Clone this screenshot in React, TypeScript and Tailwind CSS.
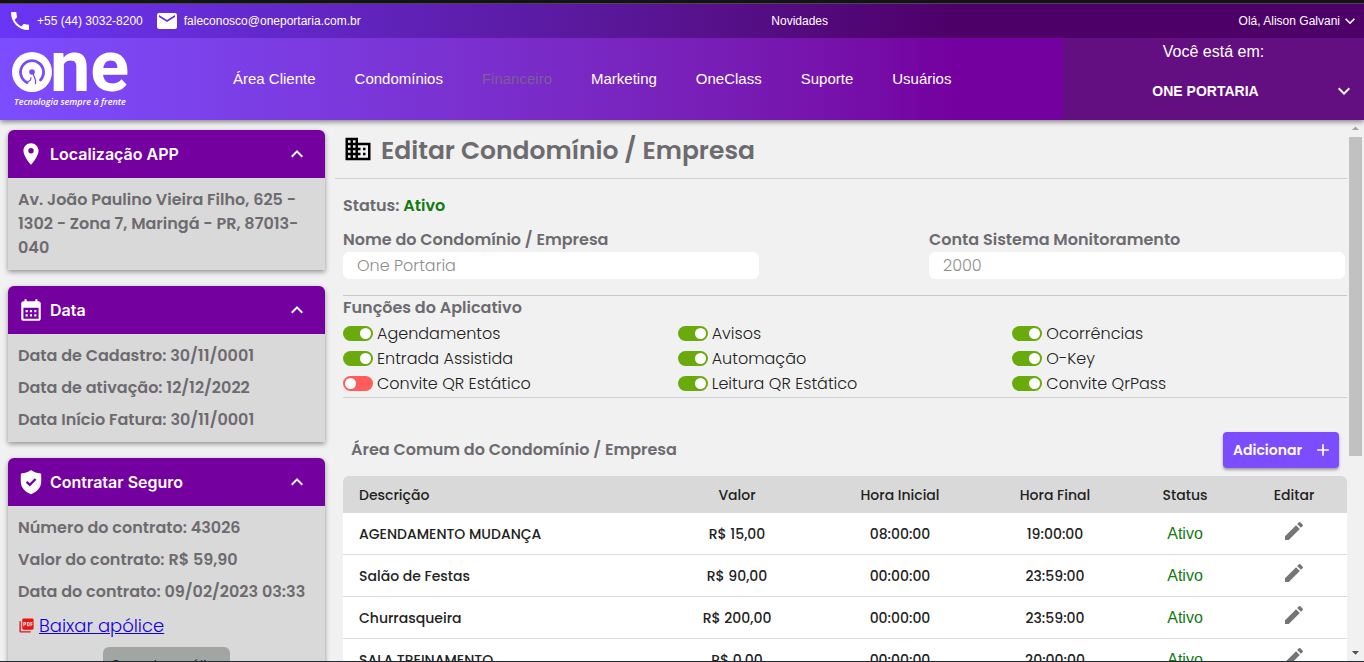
import React, { useState } from "react";
import {
  MdAdd, MdCalendarMonth, MdDomain, MdEdit, MdEmail, MdExpandLess, MdExpandMore,
  MdLocationOn, MdPhone, MdPictureAsPdf, MdArrowDropDown, MdArrowDropUp,
} from "react-icons/md";

const navItems = ["Área Cliente", "Condomínios", "Financeiro", "Marketing", "OneClass", "Suporte", "Usuários"];

const features = [
  { name: "Agendamentos", on: true },
  { name: "Avisos", on: true },
  { name: "Ocorrências", on: true },
  { name: "Entrada Assistida", on: true },
  { name: "Automação", on: true },
  { name: "O-Key", on: true },
  { name: "Convite QR Estático", on: false },
  { name: "Leitura QR Estático", on: true },
  { name: "Convite QrPass", on: true },
];

const areas = [
  { name: "AGENDAMENTO MUDANÇA", price: "R$ 15,00", start: "08:00:00", end: "19:00:00" },
  { name: "Salão de Festas", price: "R$ 90,00", start: "00:00:00", end: "23:59:00" },
  { name: "Churrasqueira", price: "R$ 200,00", start: "00:00:00", end: "23:59:00" },
  { name: "SALA TREINAMENTO", price: "R$ 0,00", start: "00:00:00", end: "20:00:00" },
];

function Logo() {
  return (
    <svg viewBox="0 0 124 62" className="h-[62px] w-[124px] overflow-visible" role="img" aria-label="One">
      <circle cx="22" cy="24" r="20" fill="#fff" />
      <path d="M17 34.500 A11.500 11.500 0 1 1 30.500 32" fill="none" stroke="#7a4bf7" strokeWidth="2.800" strokeLinecap="round" />
      <circle cx="22" cy="24" r="2.800" fill="#7a4bf7" />
      <path d="M23 25.500 L25.500 32 L25.500 35.500" fill="none" stroke="#7a4bf7" strokeWidth="1.300" strokeLinecap="round" />
      <path d="M17 34.500 L20.500 32 L21 29.500" fill="none" stroke="#7a4bf7" strokeWidth="1.200" strokeLinecap="round" />
      <text x="40" y="43" fontSize="72" fontWeight="700" fill="#fff" className="font-['Roboto',sans-serif]">ne</text>
      <text x="4" y="57" fontSize="9" fontStyle="italic" fontWeight="600" fill="#fff" className="font-['Open_Sans',sans-serif]">Tecnologia sempre à frente</text>
    </svg>
  );
}

function ShieldIcon() {
  return (
    <svg viewBox="0 0 26 26" className="size-[26px]" aria-hidden="true">
      <path d="M13 1C15.200 2.700 18.800 4 22 4.300q1.200.100 1.200 1.300V12.500C23.200 19 18.500 23 13 25.200 7.500 23 2.800 19 2.800 12.500V5.600q0-1.200 1.200-1.300C7.200 4 10.800 2.700 13 1Z" fill="#fff" />
      <path d="M8.600 12.800l3.200 3.100 5.800-5.900" fill="none" stroke="#74009f" strokeWidth="2.300" />
    </svg>
  );
}

function Card({ icon, title, children }: { icon: React.ReactNode; title: string; children: React.ReactNode }) {
  const [open, setOpen] = useState(true);
  return (
    <section className="shrink-0 rounded-t-md bg-[#d9d9d9] shadow-[0_2px_5px_rgba(0,0,0,0.4)]">
      <h2>
        <button
          type="button"
          aria-expanded={open}
          onClick={() => setOpen(!open)}
          className="flex h-12 w-full items-center gap-1.5 rounded-t-md bg-[#74009f] pl-2.5 pr-4 text-left font-['Inter',sans-serif] font-semibold text-white"
        >
          {icon}
          <span className="flex-1">{title}</span>
          <MdExpandLess className="size-6" />
        </button>
      </h2>
      {open && (
        <div className="flex flex-col gap-2 p-2.5 leading-6 font-semibold text-[#6d6a70]">{children}</div>
      )}
    </section>
  );
}

function Toggle({ name, on }: { name: string; on: boolean }) {
  return (
    <label className="flex h-[25px] items-center gap-1 text-base font-light text-[#222]">
      <input
        type="checkbox"
        defaultChecked={on}
        className="h-[15px] w-[30px] appearance-none rounded-full bg-[#ff5c5c] p-0.5 before:block before:size-[11px] before:rounded-full before:bg-white checked:bg-[#6aaa0c] checked:before:ml-auto"
      />
      <span>{name}</span>
    </label>
  );
}

function Field({ id, label, value }: { id: string; label: string; value: string }) {
  return (
    <div className="flex w-[416px] flex-col">
      <label htmlFor={id} className="text-base font-semibold leading-6 text-[#6d6a70]">{label}</label>
      <input
        id={id}
        defaultValue={value}
        className="h-[27px] rounded-md bg-white px-3.5 text-base font-light text-[#8e8e8e] outline-none"
      />
    </div>
  );
}

export default function App() {
  return (
    <div className="flex h-screen flex-col overflow-hidden border-b border-b-[#1f2933] bg-[#f1f1f1] font-['Poppins','Inter',sans-serif]">
      <header className="relative z-10 shrink-0 border-t-[3px] border-t-[#131313] font-['Liberation_Sans',Arial,sans-serif] text-white shadow-[0_2px_5px_rgba(0,0,0,0.45)]">
        <div className="flex h-[35px] items-center justify-between border-t border-t-[#4c4458] bg-linear-to-r from-[#6a35f5] to-[#4e0069] to-70% pl-2 pr-1 text-xs">
          <div className="flex items-center gap-3">
            <a href="tel:+554430328200" className="flex items-center gap-[5px]"><MdPhone className="size-6" />+55 (44) 3032-8200</a>
            <a href="mailto:faleconosco@oneportaria.com.br" className="flex items-center gap-[5px]"><MdEmail className="size-6" />faleconosco@oneportaria.com.br</a>
          </div>
          <a href="#novidades">Novidades</a>
          <button type="button" className="flex items-center">Olá, Alison Galvani<MdExpandMore className="size-5" /></button>
        </div>
        <div className="flex h-[82px] bg-linear-to-r from-[#7c4dff] to-[#74009f] to-70%">
          <a href="#inicio" className="ml-2.5 mt-2.5 w-[223px] shrink-0"><Logo /></a>
          <nav className="flex flex-1 items-center gap-[39px] text-[15px]">
            {navItems.map((item) => (
              <a key={item} href="#menu" className={item === "Financeiro" ? "text-[#77609a]" : ""}>{item}</a>
            ))}
          </nav>
          <div className="flex w-[301px] flex-col items-center bg-[#630f82] pt-0.5">
            <label htmlFor="unit" className="text-base leading-6">Você está em:</label>
            <div className="mt-3 flex h-[30px] w-full items-center">
              <select id="unit" className="flex-1 appearance-none bg-transparent pl-4 text-center text-sm font-bold outline-none">
                <option>ONE PORTARIA</option>
              </select>
              <MdExpandMore className="mr-2 size-6" />
            </div>
          </div>
        </div>
      </header>

      <div className="flex min-h-0 flex-1">
        <aside className="flex w-[335px] shrink-0 flex-col gap-4 overflow-hidden pb-2 pl-2 pr-2.5 pt-2.5">
          <Card title="Localização APP" icon={<MdLocationOn className="size-[26px]" />}>
            <p>Av. João Paulino Vieira Filho, 625 - 1302 - Zona 7, Maringá - PR, 87013-040</p>
          </Card>
          <Card title="Data" icon={<MdCalendarMonth className="size-[26px]" />}>
            <p>Data de Cadastro: 30/11/0001</p>
            <p>Data de ativação: 12/12/2022</p>
            <p>Data Início Fatura: 30/11/0001</p>
          </Card>
          <Card title="Contratar Seguro" icon={<ShieldIcon />}>
            <p>Número do contrato: 43026</p>
            <p>Valor do contrato: R$ 59,90</p>
            <p>Data do contrato: 09/02/2023 03:33</p>
            <a href="#apolice" className="flex h-[27px] items-center gap-1 text-lg font-light text-[#1200e0]">
              <MdPictureAsPdf className="size-[17px] text-[#ef1010]" />
              <span className="underline">Baixar apólice</span>
            </a>
            <button type="button" className="w-[127px] self-center rounded-md bg-[#a2a6a3] py-1.5 text-[13px] font-normal text-[#222]">Cancelar apólice</button>
          </Card>
        </aside>

        <main className="flex min-w-0 flex-1 flex-col overflow-hidden">
          <h1 className="flex h-[59px] shrink-0 items-center gap-2 border-b border-b-[#cfcfcf] pl-2 text-[25px] font-semibold text-[#6d6a70]">
            <MdDomain className="size-[30px] text-black" />
            <span className="pt-1">Editar Condomínio / Empresa</span>
          </h1>
          <div className="flex flex-col pl-2">
            <p className="mt-[15px] leading-6 font-semibold text-[#6d6a70]">Status: <span className="text-[#127a12]">Ativo</span></p>
            <div className="mt-2.5 flex justify-between border-b border-b-[#c8c8c8] pb-4 pr-0.5">
              <Field id="name" label="Nome do Condomínio / Empresa" value="One Portaria" />
              <Field id="account" label="Conta Sistema Monitoramento" value="2000" />
            </div>
            <fieldset className="border-b border-b-[#cfcfcf] pb-px">
              <legend className="pb-0.5 leading-[23px] font-semibold text-[#6d6a70]">Funções do Aplicativo</legend>
              <div className="grid grid-cols-3">
                {features.map((f) => <Toggle key={f.name} {...f} />)}
              </div>
            </fieldset>
            <div className="mt-[34px] flex items-center justify-between pl-2 pr-2">
              <h2 className="font-semibold text-[#6d6a70]">Área Comum do Condomínio / Empresa</h2>
              <button type="button" className="flex h-9 w-[116px] items-center justify-between rounded bg-[#7c4dff] pl-2.5 pr-1.5 text-sm font-semibold text-white shadow-[0_2px_3px_rgba(0,0,0,0.35)]">
                Adicionar
                <MdAdd className="size-5" />
              </button>
            </div>
            <table className="mt-2 w-full table-fixed border-separate border-spacing-0 text-sm text-[#222]">
              <colgroup>
                <col />
                <col className="w-[164px]" />
                <col className="w-[162px]" />
                <col className="w-[148px]" />
                <col className="w-[112px]" />
                <col className="w-[106px]" />
              </colgroup>
              <thead>
                <tr className="h-[37px]">
                  <th className="rounded-tl-md bg-[#d9d9d9] pl-4 text-left font-medium">Descrição</th>
                  <th className="bg-[#d9d9d9] font-medium">Valor</th>
                  <th className="bg-[#d9d9d9] font-medium">Hora Inicial</th>
                  <th className="bg-[#d9d9d9] font-medium">Hora Final</th>
                  <th className="bg-[#d9d9d9] font-medium">Status</th>
                  <th className="rounded-tr-md bg-[#d9d9d9] font-medium">Editar</th>
                </tr>
              </thead>
              <tbody className="text-center font-medium">
                {areas.map((a) => (
                  <tr key={a.name} className="h-[42px] bg-white">
                    <td className="border-b border-b-[#dcdcdc] pl-4 text-left">{a.name}</td>
                    <td className="border-b border-b-[#dcdcdc]">{a.price}</td>
                    <td className="border-b border-b-[#dcdcdc]">{a.start}</td>
                    <td className="border-b border-b-[#dcdcdc]">{a.end}</td>
                    <td className="border-b border-b-[#dcdcdc] font-['Liberation_Sans',Arial,sans-serif] text-base font-normal text-[#127a12]">Ativo</td>
                    <td className="border-b border-b-[#dcdcdc]">
                      <button type="button" aria-label="Editar" className="mx-auto block pb-1.5"><MdEdit className="size-6 text-[#757575]" /></button>
                    </td>
                  </tr>
                ))}
              </tbody>
            </table>
          </div>
        </main>

        <div aria-hidden="true" className="flex w-[17px] shrink-0 flex-col items-center bg-[#f1f1f1] text-[#505050]">
          <MdArrowDropUp className="size-[17px] shrink-0 text-[#a3a3a3]" />
          <div className="flex w-[13px] flex-1 flex-col">
            <div className="h-[63%] bg-[#c1c1c1]" />
          </div>
          <MdArrowDropDown className="size-[17px] shrink-0" />
        </div>
      </div>
    </div>
  );
}
